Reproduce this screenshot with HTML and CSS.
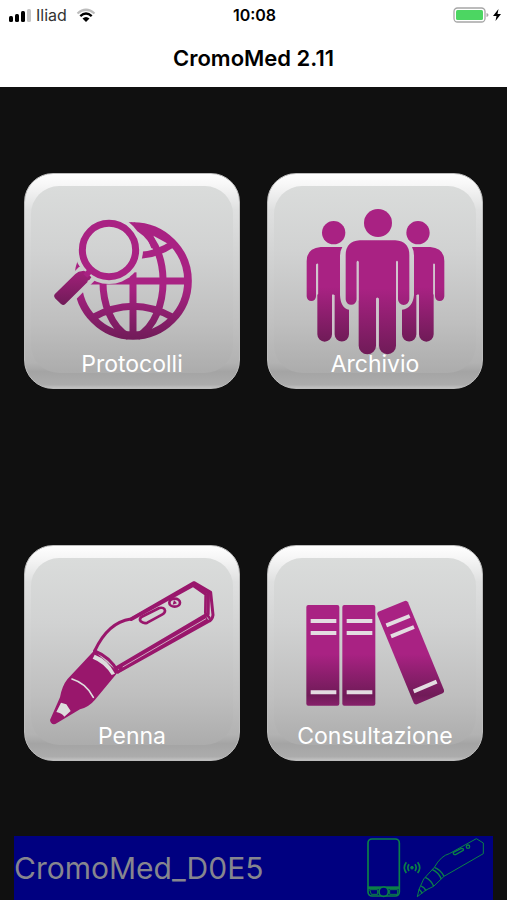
FILE: index.html
```html
<!DOCTYPE html>
<html lang="it">
<head>
    <meta charset="UTF-8">
    <meta name="viewport" content="width=device-width, initial-scale=1.0">
    <title>CromoMed 2.11</title>
    <link rel="stylesheet" href="styles.css">
</head>
<body>
    <header class="header">
        <div class="status-bar">
            <div class="status-left">
                <svg class="signal-icon" viewBox="0 0 24 14" aria-hidden="true">
                    <rect x="1" y="8" width="4" height="6" rx="1.5"/>
                    <rect x="7" y="6" width="4" height="8" rx="1.5"/>
                    <rect x="13" y="3" width="4" height="11" rx="1.5"/>
                    <rect x="19" y="1" width="4" height="13" rx="1.5" fill="#c6c6c6"/>
                </svg>
                <span class="carrier">Iliad</span>
                <svg class="wifi-icon" viewBox="0 0 20 14" aria-hidden="true">
                    <path d="M1.5 5.5Q10-2 18.5 5.5" fill="none" stroke="#bdbdbd" stroke-width="2.2"/>
                    <path d="M4.3 8.2Q10 3 15.7 8.2" fill="none" stroke="#000" stroke-width="2.4"/>
                    <path d="M6.5 10.5Q10 7.5 13.5 10.5L10 14Z"/>
                </svg>
            </div>
            <time class="clock">10:08</time>
            <div class="status-right">
                <svg class="battery-icon" viewBox="0 0 36 16" aria-hidden="true">
                    <rect x="1" y="1" width="31" height="14" rx="3.5" fill="#fff" stroke="#a6a6a6" stroke-width="1.3"/>
                    <rect x="3" y="3" width="27" height="10" rx="1.5" fill="#4cd662"/>
                    <path d="M33.5 6Q35.5 6.5 35.5 8T33.5 10Z" fill="#a6a6a6"/>
                </svg>
                <svg class="bolt-icon" viewBox="0 0 8 12" aria-hidden="true">
                    <path d="M5.5 0L0 7H3.5L2.5 12L8 5H4.5Z"/>
                </svg>
            </div>
        </div>
        <h1 class="title">CromoMed 2.11</h1>
    </header>

    <main class="menu">
        <button class="tile" type="button">
            <svg class="tile-icon" viewBox="30 24 648 648" aria-hidden="true">
                <defs>
                    <linearGradient id="globeFill" gradientUnits="userSpaceOnUse" x1="0" y1="170" x2="0" y2="525">
                        <stop offset="0" stop-color="#a92283"/>
                        <stop offset="0.55" stop-color="#a92283"/>
                        <stop offset="1" stop-color="#701b58"/>
                    </linearGradient>
                    <linearGradient id="handleFill" gradientUnits="userSpaceOnUse" x1="0" y1="320" x2="0" y2="420">
                        <stop offset="0" stop-color="#a12079"/>
                        <stop offset="1" stop-color="#701b58"/>
                    </linearGradient>
                    <mask id="lensMask" maskUnits="userSpaceOnUse" x="30" y="24" width="648" height="648">
                        <rect x="30" y="24" width="648" height="648" fill="#fff"/>
                        <circle cx="285" cy="255" r="102" fill="#000"/>
                        <path d="M240 305L115 430" stroke="#000" stroke-width="62"/>
                    </mask>
                </defs>
                <g mask="url(#lensMask)" fill="none" stroke="url(#globeFill)" stroke-width="21">
                    <circle cx="357" cy="348" r="165" stroke-width="23"/>
                    <path d="M357 322V515"/>
                    <path d="M190 348H525"/>
                    <path d="M357 182C475 222 475 460 370 515"/>
                    <path d="M357 182C239 222 239 460 344 515"/>
                    <path d="M236 458Q357 390 478 458"/>
                    <path d="M380 271Q430 268 478 236"/>
                    <path d="M340 173Q395 170 450 205L462 236L418 212Q424 226 430 246L412 250Q400 205 357 185Z" fill="url(#globeFill)" stroke="none"/>
                    <path d="M240 458Q270 510 357 515Q444 510 474 458Q435 499 385 499H329Q279 499 240 458Z" fill="url(#globeFill)" stroke="none"/>
                </g>
                <circle cx="285" cy="255" r="80" fill="none" stroke="#a92283" stroke-width="21"/>
                <path d="M206 318Q212 316 217 322L232 337L226 345Q220 345 220 352L154 417Q148 423 141 417L123 400Q117 394 122 388L184 327Q193 318 206 318Z" fill="url(#handleFill)"/>
                <path d="M208 327L226 307L238 320L220 338Z" fill="#a92283"/>
                <path d="M190 296L187 307L198 305Z" fill="#a92283"/>
            </svg>
            <span class="tile-label">Protocolli</span>
        </button>

        <button class="tile" type="button">
            <svg class="tile-icon" viewBox="27 24 648 648" aria-hidden="true">
                <defs>
                    <linearGradient id="sideFill" gradientUnits="userSpaceOnUse" x1="0" y1="168" x2="0" y2="528">
                        <stop offset="0" stop-color="#a92283"/>
                        <stop offset="0.55" stop-color="#a92283"/>
                        <stop offset="1" stop-color="#701b58"/>
                    </linearGradient>
                    <linearGradient id="frontFill" gradientUnits="userSpaceOnUse" x1="0" y1="132" x2="0" y2="566">
                        <stop offset="0" stop-color="#a92283"/>
                        <stop offset="0.55" stop-color="#a92283"/>
                        <stop offset="1" stop-color="#701b58"/>
                    </linearGradient>
                </defs>
                <g fill="url(#sideFill)">
                    <circle cx="227" cy="203" r="35"/>
                    <path d="M188 246H253Q246 257 246 272V390Q248 430 273 434V508A21 21 0 0 1 230 508V390H222V508A21 21 0 0 1 178 508V298H174V394A14 14 0 0 1 146 394V288Q146 250 188 246Z"/>
                    <circle cx="480" cy="203" r="35"/>
                    <path d="M517 246H462Q468 257 468 272V390Q464 430 432 434V508A21 21 0 0 0 475 508V390H483V508A21 21 0 0 0 527 508V298H531V394A14 14 0 0 0 559 394V288Q559 250 517 246Z"/>
                </g>
                <g fill="url(#frontFill)">
                    <circle cx="360" cy="174" r="42"/>
                    <path d="M305 226H412Q454 229 454 270V403A16 16 0 0 1 420 403V290H414V542A25 25 0 0 1 363 542V400H354V542A25 25 0 0 1 302 542V290H296V403A16 16 0 0 1 263 403V270Q263 229 305 226Z"/>
                </g>
                <path d="M178 298V386M225 390V515M480 390V515M528 298V386M299 290V406M358 400V545M417 290V406" stroke="#d3c2ce" stroke-width="5" stroke-linecap="round"/>
            </svg>
            <span class="tile-label">Archivio</span>
        </button>

        <button class="tile" type="button">
            <svg class="tile-icon" viewBox="30 28 648 648" aria-hidden="true">
                <g fill="none" stroke="#99176c" stroke-width="9" stroke-linejoin="round" stroke-linecap="round">
                    <path d="M242 346Q282 260 350 250L540 141L590 170L597 238Q595 253 582 258L312 409"/>
                    <path d="M533 147L575 176L574 232L586 246" stroke-width="8"/>
                    <path d="M540 145L583 172L582 236" stroke-width="10"/>
                    <path d="M352 251L540 147M576 238L308 396" stroke-width="10"/>
                    <path d="M242 346Q290 365 312 409"/>
                    <path d="M382 244L436 217Q451 214 453 225Q453 232 444 237L400 261Q389 265 380 257Q375 250 382 244Z" stroke-width="8"/>
                    <ellipse cx="482" cy="201" rx="16" ry="12" stroke-width="8"/>
                </g>
                <path d="M476 207L480 193L489 203Z" fill="#99176c"/>
                <path d="M580 248L314 402" stroke="#99176c" stroke-width="16"/>
                <path d="M240 345L312 409L243 492Q226 513 198 521L124 565Q110 568 108 553L138 485Q144 451 160 431Z" fill="#99176c"/>
                <path d="M242 357Q281 371 303 414L293 418Q271 382 236 369Z" fill="#dddddd"/>
                <path d="M174 430Q217 443 238 485" fill="none" stroke="#dedede" stroke-width="5" stroke-linecap="round"/>
                <path d="M141 501L157 506L170 526L151 543Q144 533 127 529Z" fill="#dddddd"/>
                <path d="M576 249L326 394" stroke="#cda8c0" stroke-width="3"/>
            </svg>
            <span class="tile-label">Penna</span>
        </button>

        <button class="tile" type="button">
            <svg class="tile-icon" viewBox="27 28 648 648" aria-hidden="true">
                <defs>
                    <linearGradient id="bookFill" gradientUnits="userSpaceOnUse" x1="0" y1="200" x2="0" y2="510">
                        <stop offset="0" stop-color="#a92283"/>
                        <stop offset="0.5" stop-color="#a92283"/>
                        <stop offset="0.9" stop-color="#701b58"/>
                        <stop offset="1" stop-color="#86206a"/>
                    </linearGradient>
                </defs>
                <g fill="url(#bookFill)">
                    <rect x="145" y="208" width="99" height="302" rx="6"/>
                    <rect x="253" y="208" width="99" height="302" rx="6"/>
                    <path d="M361 228L440 196Q447 194 450 200L558 463Q560 470 554 473L477 506Q470 508 467 501L358 237Q356 231 361 228Z"/>
                </g>
                <path d="M158 256H235M158 292H235M158 470H235M266 256H343M266 292H343M266 470H343M385 269L455 241M399 302L468 274M467 467L536 438" stroke="#e3dce1" stroke-width="12"/>
            </svg>
            <span class="tile-label">Consultazione</span>
        </button>
    </main>

    <footer class="device-bar">
        <span class="device-name">CromoMed_D0E5</span>
        <svg class="device-icon" viewBox="34 36 360 186" fill="none" stroke="#0b8048" stroke-width="3" aria-hidden="true">
            <rect x="40" y="42" width="94" height="171" rx="12" stroke-width="5"/>
            <path d="M40 188H134" stroke-width="8"/>
            <circle cx="87" cy="200" r="14" fill="#000080" stroke-width="5"/>
            <path d="M45 194H69V208H50ZM105 194H129V208H105Z"/>
            <circle cx="172" cy="128" r="4" fill="#0b8048"/>
            <path d="M163 118Q156 128 163 138M155 112Q143 128 155 144M181 118Q188 128 181 138M189 112Q201 128 189 144" stroke-width="5"/>
            <path d="M239 127Q259 92 284 86L365 41L386 54V86L268 154L237 184L214 195L188 215L193 193L207 162Z"/>
            <path d="M296 82L320 70Q328 70 326 76L303 89Q295 90 296 82ZM239 127Q258 134 268 154M232 133Q252 142 260 162M212 157Q230 166 237 184M199 183Q211 188 214 198M193 193Q199 199 203 205" stroke-width="4"/>
            <circle cx="340" cy="65" r="5" stroke-width="4"/>
        </svg>
    </footer>
</body>
</html>
```
FILE: styles.css
```css
* {
    margin: 0;
    padding: 0;
    box-sizing: border-box;
}

body {
    font-family: Inter, 'Liberation Sans', sans-serif;
    background-color: #101010;
    min-height: 100vh;
    display: flex;
    flex-direction: column;
}

svg {
    display: block;
}

.header {
    background-color: #fff;
    color: #000;
    height: 87px;
}

.status-bar {
    display: grid;
    grid-template-columns: 1fr auto 1fr;
    align-items: center;
    height: 30px;
    padding: 0 6px 0 8px;
    font-size: 16px;
}

.status-left,
.status-right {
    display: flex;
    align-items: center;
    gap: 4px;
}

.status-right {
    justify-content: flex-end;
}

.signal-icon {
    width: 24px;
    height: 14px;
}

.carrier {
    color: #333;
    margin-right: 5px;
}

.wifi-icon {
    width: 20px;
    height: 14px;
}

.clock {
    font-weight: 600;
}

.battery-icon {
    width: 36px;
    height: 16px;
}

.bolt-icon {
    width: 8px;
    height: 12px;
}

.title {
    font-size: 22px;
    font-weight: 600;
    line-height: 56px;
    text-align: center;
}

.menu {
    display: grid;
    grid-template-columns: 1fr 1fr;
    column-gap: 27px;
    row-gap: 156px;
    padding: 86px 24px 75px;
}

.tile {
    position: relative;
    aspect-ratio: 1;
    border: 1px solid #bcbcbc;
    border-radius: 29px;
    background: linear-gradient(#fff, #f6f6f6 6%, #dfe0e0 17%, #d2d3d3 38%, #c0c0c0 70%, #b2b2b2 88%, #a4a4a4 92%, #acacac 98%, #c8c8c8);
    background-origin: border-box;
    overflow: hidden;
    color: #fff;
    font-family: inherit;
    cursor: pointer;
}

/* inner face of the glossy button */
.tile::before {
    content: "";
    position: absolute;
    inset: 12px 6px 15px;
    border-radius: 28px;
    background: linear-gradient(#dadcdb, #d1d2d2 35%, #bfbfbf 73%, #acacac);
}

.tile-icon {
    position: absolute;
    inset: -1px;
}

.tile-label {
    position: absolute;
    left: 0;
    right: 0;
    bottom: 9px;
    font-size: 23px;
    line-height: 30px;
}

.device-bar {
    display: flex;
    align-items: center;
    justify-content: space-between;
    flex: 1;
    min-height: 64px;
    margin: 0 14px;
    padding-right: 7px;
    background-color: #000080;
}

.device-name {
    color: #86868e;
    font-size: 30px;
}

.device-icon {
    width: 120px;
    height: 62px;
}
```
